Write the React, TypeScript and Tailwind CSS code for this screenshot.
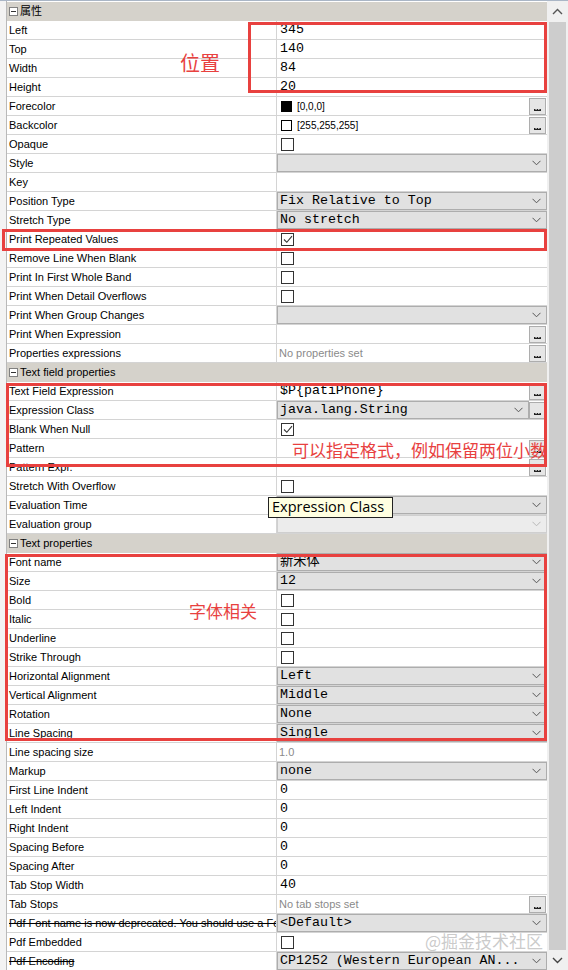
import React from "react";

// Property sheet for a selected text field: grouped rows of label / editor
// pairs, a Windows-style scrollbar on the right, and a few red call-outs
// drawn on top.

type Value =
  | { kind: "none" }
  | { kind: "text"; text: string }
  | { kind: "muted"; text: string }
  | { kind: "check"; checked: boolean }
  | { kind: "color"; swatch: string; text: string }
  | { kind: "select"; text: string; disabled?: boolean };

type Row =
  | { section: string }
  | { label: string; value: Value; button?: boolean; strike?: boolean };

const none: Value = { kind: "none" };
const text = (t: string): Value => ({ kind: "text", text: t });
const check = (c = false): Value => ({ kind: "check", checked: c });
const select = (t = "", disabled = false): Value => ({ kind: "select", text: t, disabled });

const rows: Row[] = [
  { section: "属性" },
  { label: "Left", value: text("345") },
  { label: "Top", value: text("140") },
  { label: "Width", value: text("84") },
  { label: "Height", value: text("20") },
  { label: "Forecolor", value: { kind: "color", swatch: "#000", text: "[0,0,0]" }, button: true },
  { label: "Backcolor", value: { kind: "color", swatch: "#fff", text: "[255,255,255]" }, button: true },
  { label: "Opaque", value: check() },
  { label: "Style", value: select() },
  { label: "Key", value: none },
  { label: "Position Type", value: select("Fix Relative to Top") },
  { label: "Stretch Type", value: select("No stretch") },
  { label: "Print Repeated Values", value: check(true) },
  { label: "Remove Line When Blank", value: check() },
  { label: "Print In First Whole Band", value: check() },
  { label: "Print When Detail Overflows", value: check() },
  { label: "Print When Group Changes", value: select() },
  { label: "Print When Expression", value: none, button: true },
  { label: "Properties expressions", value: { kind: "muted", text: "No properties set" }, button: true },
  { section: "Text field properties" },
  { label: "Text Field Expression", value: text("$P{patiPhone}"), button: true },
  { label: "Expression Class", value: select("java.lang.String"), button: true },
  { label: "Blank When Null", value: check(true) },
  { label: "Pattern", value: none, button: true },
  { label: "Pattern Expr.", value: none, button: true },
  { label: "Stretch With Overflow", value: check() },
  { label: "Evaluation Time", value: select() },
  { label: "Evaluation group", value: select("", true) },
  { section: "Text properties" },
  { label: "Font name", value: select("新宋体") },
  { label: "Size", value: select("12") },
  { label: "Bold", value: check() },
  { label: "Italic", value: check() },
  { label: "Underline", value: check() },
  { label: "Strike Through", value: check() },
  { label: "Horizontal Alignment", value: select("Left") },
  { label: "Vertical Alignment", value: select("Middle") },
  { label: "Rotation", value: select("None") },
  { label: "Line Spacing", value: select("Single") },
  { label: "Line spacing size", value: { kind: "muted", text: "1.0" } },
  { label: "Markup", value: select("none") },
  { label: "First Line Indent", value: text("0") },
  { label: "Left Indent", value: text("0") },
  { label: "Right Indent", value: text("0") },
  { label: "Spacing Before", value: text("0") },
  { label: "Spacing After", value: text("0") },
  { label: "Tab Stop Width", value: text("40") },
  { label: "Tab Stops", value: { kind: "muted", text: "No tab stops set" }, button: true },
  {
    label: "Pdf Font name is now deprecated. You should use a Font Extension",
    value: select("<Default>"),
    strike: true,
  },
  { label: "Pdf Embedded", value: check() },
  { label: "Pdf Encoding", value: select("CP1252 (Western European AN..."), strike: true },
];

const sans = "font-['Liberation_Sans','Noto_Sans_CJK_SC',sans-serif]";
const mono = "font-['Liberation_Mono','Noto_Sans_CJK_SC',monospace]";

function Chevron({ light }: { light?: boolean }) {
  return (
    <svg width="9" height="6" viewBox="0 0 9 6" className="shrink-0">
      <path d="M0.5 0.8 L4.5 4.8 L8.5 0.8" fill="none" stroke={light ? "#b8b8b8" : "#555"} strokeWidth="1" />
    </svg>
  );
}

function Ellipsis() {
  return (
    <div className="ml-auto mr-[1px] flex h-[17px] w-[17px] shrink-0 items-end justify-center border border-[#adadad] bg-[#e6e6e6] pb-[2px]">
      <svg width="7" height="3" viewBox="0 0 7 3">
        <rect x="0" y="0" width="1.5" height="2" fill="#222" />
        <rect x="2.7" y="0" width="1.5" height="2" fill="#222" />
        <rect x="5.4" y="0" width="1.5" height="2" fill="#222" />
        <rect x="0" y="1" width="7" height="1" fill="#222" />
      </svg>
    </div>
  );
}

function CheckBox({ checked }: { checked: boolean }) {
  return (
    <div className="ml-[4px] flex h-[13px] w-[13px] items-center justify-center border border-[#333] bg-white">
      {checked ? (
        <svg width="10" height="9" viewBox="0 0 10 9">
          <path d="M1 4.5 L3.8 7.3 L9 1.2" fill="none" stroke="#333" strokeWidth="1.1" />
        </svg>
      ) : null}
    </div>
  );
}

function ValueCell({ value, button }: { value: Value; button?: boolean }) {
  switch (value.kind) {
    case "text":
      return (
        <div className="flex h-full items-center">
          <span className={`${mono} pl-[3px] text-[13.3px] leading-none text-black`}>{value.text}</span>
          {button ? <Ellipsis /> : null}
        </div>
      );
    case "muted":
      return (
        <div className="flex h-full items-center">
          <span className={`${sans} pl-[2px] text-[11px] text-[#8a8a8a]`}>{value.text}</span>
          {button ? <Ellipsis /> : null}
        </div>
      );
    case "check":
      return (
        <div className="flex h-full items-center">
          <CheckBox checked={value.checked} />
        </div>
      );
    case "color":
      return (
        <div className="flex h-full items-center">
          <div
            className="ml-[4px] h-[11px] w-[11px] border border-black"
            style={{ backgroundColor: value.swatch }}
          />
          <span className={`${sans} pl-[5px] text-[10px] text-black`}>{value.text}</span>
          {button ? <Ellipsis /> : null}
        </div>
      );
    case "select":
      return (
        <div className="flex h-full items-center">
          <div
            className={`flex h-full flex-1 items-center overflow-hidden border ${
              value.disabled ? "border-[#cfcfcf] bg-[#ececec]" : "border-[#adadad] bg-[#e1e1e1]"
            }`}
          >
            <span className={`${mono} flex-1 truncate pl-[2px] text-[13.3px] leading-none text-black`}>
              {value.text}
            </span>
            <div className="pr-[5px]">
              <Chevron light={value.disabled} />
            </div>
          </div>
          {button ? <Ellipsis /> : null}
        </div>
      );
    default:
      return (
        <div className="flex h-full items-center">{button ? <Ellipsis /> : null}</div>
      );
  }
}

function SectionRow({ title }: { title: string }) {
  return (
    <div className="flex h-[19px] items-center border-b border-[#d5d2cb] bg-[#d5d2cb] pl-[2px]">
      <div className="flex h-[9px] w-[9px] items-center justify-center border border-[#808080] bg-white">
        <div className="h-[1px] w-[5px] bg-[#333]" />
      </div>
      <span className={`${sans} pl-[2px] text-[11px] leading-none text-black`}>{title}</span>
    </div>
  );
}

function PropRow({ row }: { row: Extract<Row, { label: string }> }) {
  return (
    <div className="grid h-[19px] grid-cols-[270px_1fr] border-b border-[#d4d4d4]">
      <div className="flex items-center overflow-hidden whitespace-nowrap border-r border-[#d4d4d4] pl-[2px]">
        <span className={`${sans} text-[11px] text-black ${row.strike ? "line-through" : ""}`}>
          {row.label}
        </span>
      </div>
      <div className="h-[18px] overflow-hidden">
        <ValueCell value={row.value} button={row.button} />
      </div>
    </div>
  );
}

function ScrollBar() {
  return (
    <div className="flex w-[21px] flex-col bg-[#f0f0f0]">
      <div className="flex h-[21px] items-center justify-center">
        <svg width="11" height="7" viewBox="0 0 11 7">
          <path d="M1 6 L5.5 1.5 L10 6" fill="none" stroke="#555" strokeWidth="1.4" />
        </svg>
      </div>
      <div className="mx-[2px] flex-1 bg-[#cdcdcd]" />
      <div className="flex h-[20px] items-center justify-center">
        <svg width="11" height="7" viewBox="0 0 11 7">
          <path d="M1 1 L5.5 5.5 L10 1" fill="none" stroke="#444" strokeWidth="1.4" />
        </svg>
      </div>
    </div>
  );
}

export default function App() {
  return (
    <div className="relative h-[970px] w-[568px] overflow-hidden bg-white">
      <div className="flex h-full border-t border-[#aab6c6]">
        <div className="w-[7px] border-r border-[#b9b9b9] bg-[#f3f3f3]" />
        <div className="w-[540px] pt-[1px]">
          {rows.map((row, i) =>
            "section" in row ? (
              <SectionRow key={i} title={row.section} />
            ) : (
              <PropRow key={i} row={row} />
            ),
          )}
        </div>
        <ScrollBar />
      </div>

      {/* tooltip left over from hovering the class editor */}
      <div className="absolute left-[268px] top-[497px] flex h-[21px] w-[125px] items-center border border-[#222] bg-[#ffffe1] pl-[3px]">
        <span className="font-['Open_Sans',sans-serif] text-[14.5px] leading-none text-black">Expression Class</span>
      </div>

      {/* red call-outs */}
      <div className="pointer-events-none absolute left-[248px] top-[22px] h-[71px] w-[299px] border-[3px] border-[#e8413f]" />
      <span className="absolute left-[180px] top-[53px] font-['Noto_Sans_CJK_SC',sans-serif] text-[20px] leading-none text-[#e8413f]">
        位置
      </span>
      <div className="pointer-events-none absolute left-[2px] top-[229px] h-[22px] w-[545px] border-[3px] border-[#e8413f]" />
      <div className="pointer-events-none absolute left-[6px] top-[383px] h-[84px] w-[541px] border-[3px] border-[#e8413f]" />
      <div className="absolute left-[292px] top-[439px] w-[256px] overflow-hidden whitespace-nowrap">
        <span className="font-['Noto_Sans_CJK_SC',sans-serif] text-[17px] leading-none text-[#e8413f]">
          可以指定格式，例如保留两位小数
        </span>
      </div>
      <div className="pointer-events-none absolute left-[5px] top-[554px] h-[187px] w-[542px] border-[3px] border-[#e8413f]" />
      <span className="absolute left-[189px] top-[602px] font-['Noto_Sans_CJK_SC',sans-serif] text-[17px] leading-none text-[#e8413f]">
        字体相关
      </span>

      <span className="absolute left-[425px] top-[932px] font-['Noto_Sans_CJK_SC',sans-serif] text-[17px] leading-none text-[#bdbdbd]/80">
        @掘金技术社区
      </span>
    </div>
  );
}
